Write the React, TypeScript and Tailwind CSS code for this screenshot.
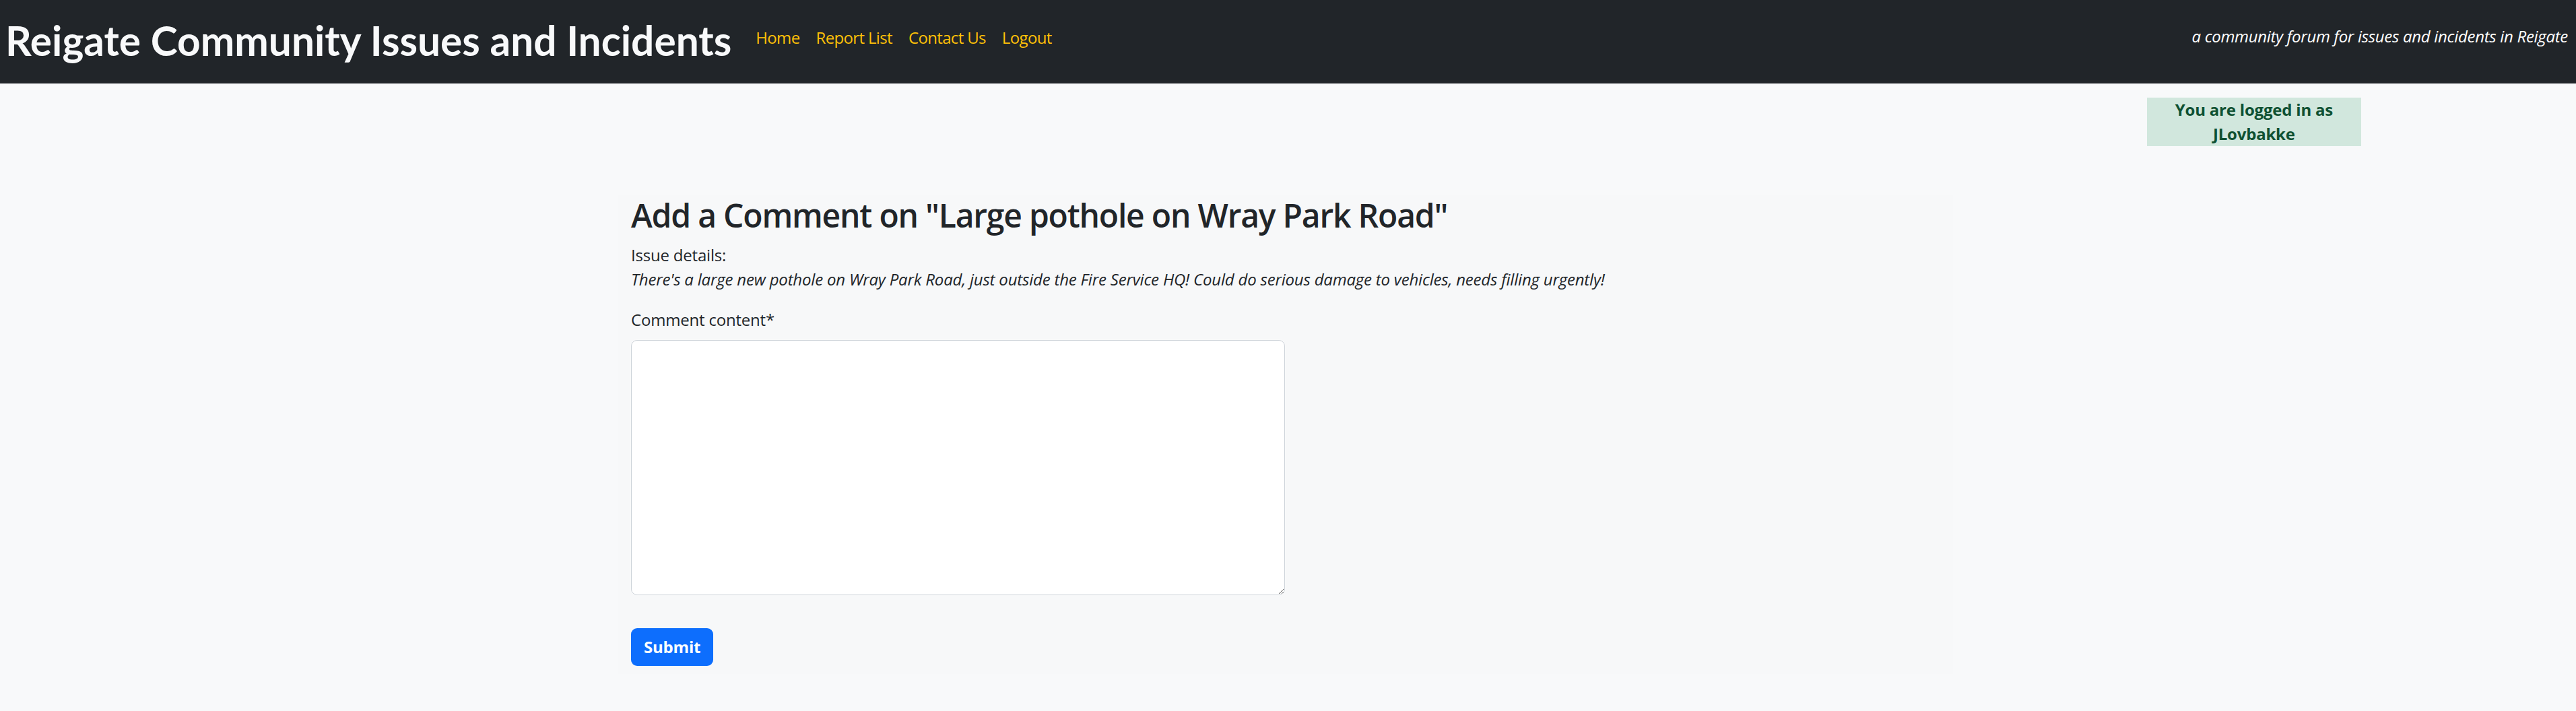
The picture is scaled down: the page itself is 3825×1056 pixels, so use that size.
import { useState } from "react";

const NAV_LINKS = ["Home", "Report List", "Contact Us", "Logout"];

const BODY_FONT = "font-['Open_Sans',sans-serif]";

export default function App() {
  const [comment, setComment] = useState("");

  return (
    <div className={`min-h-screen bg-[#f8f9fa] text-[#212529] tracking-[-0.2px] ${BODY_FONT}`}>
      {/* Navbar */}
      <nav className="h-[124px] bg-[#212529] flex items-center pl-[8px] pr-[12px]">
        <a
          href="#"
          className="font-['Lato',sans-serif] font-bold text-[60.4px] leading-[1.2] tracking-normal text-[#f8f9fa] mr-[24px] -mt-[4px]"
        >
          Reigate Community Issues and Incidents
        </a>
        <ul className="flex items-center -mt-[12px] tracking-[-0.65px]">
          {NAV_LINKS.map((link) => (
            <li key={link}>
              <a href="#" className="block px-[12px] text-[24px] leading-[36px] text-[#ffc107]">
                {link}
              </a>
            </li>
          ))}
        </ul>
        <p className="ml-auto italic text-[24px] leading-[36px] text-white -mt-[16px] tracking-[-0.3px]">
          a community forum for issues and incidents in Reigate
        </p>
      </nav>

      {/* Logged in notice */}
      <div className="grid grid-cols-12 mt-[21px]">
        <div className="col-start-11 bg-[#d1e7dd] text-[#0f5132] font-bold text-[24px] leading-[36px] text-center">
          <p>You are logged in as</p>
          <p>JLovbakke</p>
        </div>
      </div>

      {/* Comment form */}
      <main className="w-[1982px] ml-[918px] mt-[72px] bg-[#f7f8f9] pl-[19px] pt-[2px] pb-[12px]">
        <h2 className="text-[48px] leading-[1.2] font-semibold tracking-[-1.2px] mb-[12px]">
          Add a Comment on "Large pothole on Wray Park Road"
        </h2>
        <p className="text-[24px] leading-[36px]">Issue details:</p>
        <p className="text-[24px] leading-[36px] italic mb-[24px]">
          There's a large new pothole on Wray Park Road, just outside the Fire Service HQ! Could do
          serious damage to vehicles, needs filling urgently!
        </p>
        <form onSubmit={(e) => e.preventDefault()}>
          <label htmlFor="content" className="block text-[24px] leading-[36px] mb-[12px]">
            Comment content*
          </label>
          <textarea
            id="content"
            value={comment}
            onChange={(e) => setComment(e.target.value)}
            className="block w-[971px] h-[379px] bg-white border-[1.5px] border-[#ced4da] rounded-[9px] px-[18px] py-[9px] text-[24px] outline-none"
          />
          <button
            type="submit"
            className="mt-[49px] h-[56px] px-[19px] rounded-[9px] bg-[#0d6efd] text-white font-bold text-[24px] leading-[36px]"
          >
            Submit
          </button>
        </form>
      </main>
    </div>
  );
}
